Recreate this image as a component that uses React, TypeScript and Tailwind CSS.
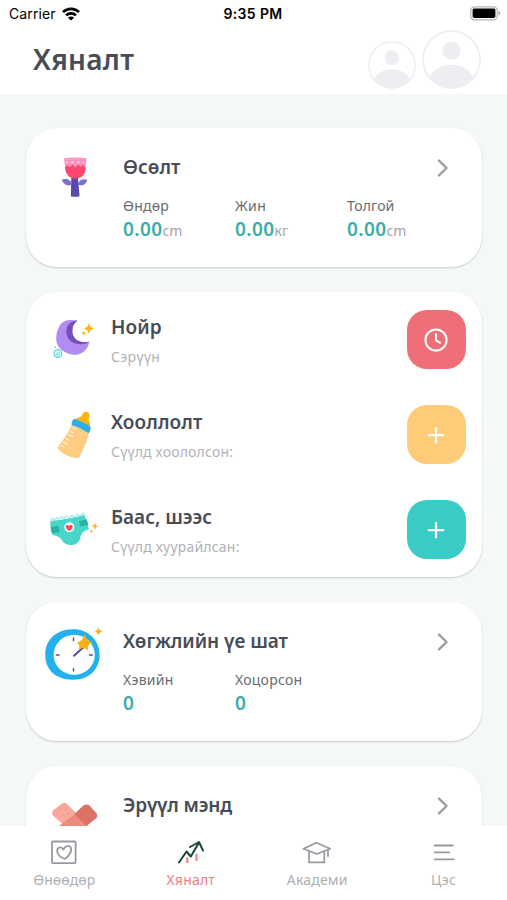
import type { ReactNode } from 'react';
import clsx from 'clsx';

interface Stat {
  label: string;
  labelClass: string;
  value: string;
  unit?: string;
}

const GROWTH_STATS: Stat[] = [
  { label: 'Өндөр', labelClass: 'tracking-[0.2px]', value: '0.00', unit: 'cm' },
  { label: 'Жин', labelClass: 'tracking-[0.4px]', value: '0.00', unit: 'кг' },
  { label: 'Толгой', labelClass: 'tracking-[0.1px]', value: '0.00', unit: 'cm' },
];

const MILESTONE_STATS: Stat[] = [
  { label: 'Хэвийн', labelClass: 'tracking-[0.25px]', value: '0' },
  { label: 'Хоцорсон', labelClass: 'tracking-[0.25px]', value: '0' },
];

function WifiIcon() {
  return (
    <svg viewBox="0 0 18 14" className="h-[14px] w-[18px]" fill="none" stroke="#000" strokeWidth="2.7">
      <path d="M1 5.100C5.400.7 12.600.7 17 5.100" />
      <path d="M4 8.400c2.800-2.700 7.200-2.700 10 0" />
      <path d="M9 13.600 5.900 10.700c1.700-1.600 4.500-1.600 6.200 0z" fill="#000" stroke="none" />
    </svg>
  );
}

function BatteryIcon() {
  return (
    <svg viewBox="0 0 31 15" className="h-[15px] w-[31px]">
      <rect x=".8" y=".8" width="26.4" height="13" rx="3.600" fill="#fff" stroke="#b4b4b4" strokeWidth="1.200" />
      <rect x="2.600" y="2.600" width="22.800" height="9.400" rx="1.800" />
      <path d="M28.500 5v4.600c1-.3 1.700-1.200 1.700-2.300S29.500 5.300 28.500 5z" fill="#a6a6a6" />
    </svg>
  );
}

function Avatar({ className }: { className: string }) {
  return (
    <svg viewBox="0 0 58 58" className={className}>
      <path d="M7.500 46.500C12 38 20 34.200 29 34.200S46 38 50.500 46.500C45 53.500 37.500 57 29 57S13 53.500 7.500 46.500z" fill="#edeef1" />
      <circle cx="29" cy="20.300" r="9" fill="#edeef1" />
      <circle cx="29" cy="29" r="28" fill="none" stroke="#edeef1" strokeWidth="1.800" />
    </svg>
  );
}

function Chevron() {
  return (
    <svg viewBox="0 0 12 20" className="mt-[2px] h-5 w-3" fill="none" stroke="#9c9fa3" strokeWidth="2.400" strokeLinecap="round" strokeLinejoin="round">
      <path d="M2 2.600 9.600 10 2 17.400" />
    </svg>
  );
}

function FlowerIcon() {
  return (
    <svg viewBox="0 0 30 44" className="h-[44px] w-[30px]">
      <path d="M11.300 21h6.500l1.800 20.200c-3 .7-6 .7-8.700.2z" fill="#5a4bab" />
      <path d="M11.800 29.500C10 31 4 31.500 1.800 24.600c4.200-1.400 9.200-.3 10 4.900zM18 29.500c2 1.500 7.500 1.700 9.300-4.800-4.300-1.400-8.400-.1-9.300 4.800z" fill="#7b70d8" />
      <path d="M4 3.200c7-.9 15.600-.8 22.700 0L25 15H5.500z" fill="#ff8fbd" />
      <path d="M5 12l2.500-1.500 2.200 1.700 2.800-2.700 2.500 2.900 3.200-2.900 2.200 2.500 2.300-2.300 2.800 2.700c.2 7-3.600 11-10 11C8.800 23.400 5.400 19 5 12z" fill="#ff4772" />
      <g fill="#ffd3e6">
        <circle cx="7" cy="7.300" r="1" />
        <circle cx="12.200" cy="7.300" r="1.200" />
        <circle cx="18" cy="7.300" r="1.200" />
        <circle cx="23.500" cy="7.300" r="1" />
      </g>
      <path d="M5 4.100h20.700" stroke="#ffb7d5" strokeWidth=".8" strokeDasharray="1.500 1.200" />
    </svg>
  );
}

function MoonIcon() {
  return (
    <svg viewBox="0 0 44 42" className="h-[42px] w-[44px]">
      <path d="M25.500 1.500C17 .2 10.500 1.300 7.500 7 5 11.500 3.800 16 4.300 21.500 5 31 17 36.800 25.500 35.500c7-1.500 10.500-6.500 11.900-12.800C27 25.500 20.500 20 20.300 12c.1-5 2-8 5.200-10.500z" fill="#b28cf0" />
      <path d="M25.500 1.500C17 2 14 7.500 14.400 13.600 15 24 27 28.500 37.400 22.700 27 24.500 20.500 20 20.300 12c.1-5 2-8 5.200-10.500z" fill="#7651bd" />
      <path d="M37 3.300c.5 4 1.600 5.600 5.700 6.200-4 .8-5.200 2.400-5.700 6.400-.7-4-1.900-5.600-6-6.400 4.100-.7 5.400-2.400 6-6.200z" fill="#fdb515" />
      <circle cx="31.700" cy="14.200" r="1.400" fill="#fdb515" />
      <circle cx="5.900" cy="34.500" r="3.900" fill="#e1fbf8" stroke="#55d5cd" strokeWidth="1.200" />
      <path d="M4 34.200c.7 2.700 3.800 2.200 3.500.2-.2-1.600-2.300-1.100-1.900.2" fill="none" stroke="#55d5cd" strokeWidth=".9" />
      <circle cx="3.300" cy="28.300" r=".9" fill="#55d5cd" />
    </svg>
  );
}

function BottleIcon() {
  return (
    <svg viewBox="0 0 40 50" className="h-[50px] w-[40px]">
      <path d="m18 14.500 16.700 8c-.8 9-6 17-9.700 25.500C17.500 48.500 8 44.500 3.200 37.500 9 30.500 14 23 18 14.500z" fill="#ffcd82" />
      <path d="M20.600 10c2.500-2.800 5.600-2.800 7.500-4.300.2-4.800 7.600-5.400 7.500 0-.1 2-1.100 2.600-.7 4.300.6 2.300 2 4 .7 7.500z" fill="#fdb515" />
      <path d="M20.300 8.800c5.500 2 10.800 4.200 15.900 7.500.9 2.500-.1 5.200-1.500 6.900-5.500-3.700-11-6.200-17-8.200-.6-2.500.6-4.700 2.600-6.200z" fill="#2eaee5" />
      <path d="m18.500 17.800 4 1.900M16.500 21.500l3 1.500M14.500 24.500l4.500 2.300M11.500 28.500l3.500 1.800M9 32l5 2.500M6.500 35.500l3.500 1.700" stroke="#fff" strokeWidth="1" />
    </svg>
  );
}

function DiaperIcon() {
  return (
    <svg viewBox="0 0 52 38" className="h-[38px] w-[52px]">
      <path d="M2.500 10C13 9 25 7 36.500 4l4.500 14.500c-5.500 1-8 4-8.700 8.500C30 36 18 36 14 29.500 12 26 9.500 25 4.500 24 2.500 20 2 14 2.500 10z" fill="#48d6c9" />
      <path d="M2.500 9.700 4.500 7l2 1.800L9 6.300l2 1.800 3-2.600 2 1.900 3-2.300 2 1.700 3.200-2.600 2 1.800 3-2.500L32 4.800l3.500-2.600L37.500 4.600" fill="none" stroke="#a7eee5" strokeWidth="1.300" />
      <path d="m3 16 7.500-1.200 1 6.400-7.500 1zM31 10.200l7.700-2 1.700 5.800-8.200 1.500z" fill="#24b3a5" />
      <circle cx="21.300" cy="16.300" r="5" fill="#fff" />
      <path d="M21.600 20.300c-6-3.600-4.300-8-.4-5.600 3.400-2.800 5.600 1.200.4 5.600z" fill="#fb4e5b" />
      <path d="M47 11.500c.5 2.600 1.200 3.200 3.500 3.700-2.500.7-3.200 1.500-3.500 4-.5-2.500-1.300-3.300-3.700-4 2.400-.5 3.200-1.100 3.700-3.700z" fill="#fdb53b" />
      <circle cx="43.500" cy="20.300" r="1.200" fill="#fdb53b" />
    </svg>
  );
}

function ClockIcon() {
  return (
    <svg viewBox="0 0 60 56" className="h-[56px] w-[60px]">
      <path d="M28 3.300C43 2.500 56 13.500 55.600 29 55.600 44 44 54 29 53.700 12 54 1 43.500 1.300 29 1 14.500 12 3.500 28 3.300z" fill="#22b1ed" />
      <ellipse cx="30.200" cy="28.800" rx="20.600" ry="20" fill="#fff" />
      <g stroke="#5a45a5" strokeLinecap="round">
        <path d="M29.500 12v2.800M29.500 42.500v2.500M12.500 29h2.600M45.500 29h2.800" strokeWidth="1.400" />
        <path d="m30 29.700 10.800-9.700" strokeWidth="2" />
      </g>
      <path d="M40.500 7.500c1.200 5.600 3 7.500 8.500 8.800-4 1.600-6 3-4.800 8.700-2.700-3-5.200-3.700-9.400-1.500 1.300-2.500.5-4.700-2-7.200 4.200-.5 6.200-3 7.700-8.800z" fill="#fdb010" />
      <path d="M54.500 1c.5 3 1.500 3.900 4.200 4.200-2.700.8-3.700 1.800-4.200 4.500-.7-2.700-1.700-3.800-4.400-4.500 2.700-.6 3.800-1.500 4.400-4.200z" fill="#fdb010" />
    </svg>
  );
}

function BandageIcon() {
  return (
    <svg viewBox="0 0 48 42" className="h-[42px] w-[48px]">
      <path d="M2 9.500 11 2.500q2.500-1.500 5 .5l21 21L25 35 2 14.500q-1.500-2.500 0-5z" fill="#f9a99b" />
      <path d="M45.500 12 39 5q-3-2.500-6.500-.5L24 13 8 25l10 12L45.500 17q1.500-2.500 0-5z" fill="#ea8d7e" />
      <path d="m32 5q3.500-2.500 6.500 0l7.500 8.500q0 2-1.500 4L35.500 25 23.500 13z" fill="#dc7266" />
      <g fill="#ea8d7e">
        <circle cx="10" cy="7.500" r=".8" />
        <circle cx="15" cy="8.500" r=".8" />
        <circle cx="6" cy="13" r=".8" />
        <circle cx="12" cy="14" r=".8" />
        <circle cx="17.500" cy="12.500" r=".8" />
      </g>
    </svg>
  );
}

function TimerGlyph() {
  return (
    <svg viewBox="0 0 24 24" className="h-6 w-6" fill="none" stroke="#fff" strokeWidth="2" strokeLinecap="round">
      <circle cx="12" cy="12" r="10.600" />
      <path d="M12 6v6.500l4.200 2.300" />
    </svg>
  );
}

function PlusGlyph() {
  return (
    <svg viewBox="0 0 24 24" className="h-6 w-6" stroke="#fff" strokeWidth="2.200" strokeLinecap="round">
      <path d="M12 5v14.400M4.800 12.200h14.400" />
    </svg>
  );
}

function HeartBoxIcon() {
  return (
    <svg viewBox="0 0 26 24" className="h-6 w-[26px]" fill="none" stroke="#96999f" strokeWidth="1.800" strokeLinejoin="round">
      <rect x="1" y="1.500" width="23.600" height="21.600" rx=".8" />
      <path d="M13.800 19C8.500 16.900 6 13.600 6.200 10.400c.3-3.500 4.500-4.300 6.300-.8 1-3.800 5.700-4.900 7.300-1.900 1.700 3.300-1.700 8.500-6 11.300z" />
    </svg>
  );
}

function TrendIcon() {
  return (
    <svg viewBox="0 0 28 26" className="h-[26px] w-7" fill="none" strokeWidth="2" strokeLinecap="round" strokeLinejoin="round">
      <path d="m2 23.500 7.500-11 4.300 5L22 3.500M13 8l9-5 4 8.500" stroke="#17483c" />
      <path d="M10.300 18.300V24M19.500 15v7" stroke="#f27b82" strokeLinecap="butt" />
    </svg>
  );
}

function AcademyIcon() {
  return (
    <svg viewBox="0 0 30 24" className="h-6 w-[30px]" fill="none" stroke="#96999f" strokeWidth="1.700" strokeLinejoin="round" strokeLinecap="round">
      <path d="M1.500 8.800 14.300 2.700l14 6L14.800 14z" />
      <path d="M7 11.500v10.900h15.300V11.300M26 9.800v6.300" />
    </svg>
  );
}

function MenuIcon() {
  return (
    <svg viewBox="0 0 24 24" className="h-6 w-6" stroke="#96999f" strokeWidth="1.800" strokeLinecap="round">
      <path d="M2.700 5.500h18.200M2.700 12.300h14.600M2.700 19.300h19" />
    </svg>
  );
}

function Card({ className, children }: { className?: string; children: ReactNode }) {
  return (
    <section className={clsx('shrink-0 rounded-[31px] bg-white shadow-[0_1px_2px_rgba(0,0,0,0.18)]', className)}>
      {children}
    </section>
  );
}

interface SummaryCardProps {
  icon: ReactNode;
  iconClass: string;
  title: string;
  titleClass: string;
  stats?: Stat[];
}

function SummaryCard({ icon, iconClass, title, titleClass, stats = [] }: SummaryCardProps) {
  return (
    <Card className="flex h-[139px]">
      <div className={clsx('w-[97px] shrink-0', iconClass)}>{icon}</div>
      <div className="flex-1 pt-[25px]">
        <div className="flex items-center justify-between pr-[33px]">
          <h2 className={clsx('text-[19px] leading-7 font-semibold whitespace-nowrap text-[#484c57]', titleClass)}>{title}</h2>
          <Chevron />
        </div>
        <div className="mt-[15px] grid grid-cols-[112px_112px_112px]">
          {stats.map((stat) => (
            <div key={stat.label}>
              <div className={clsx('text-[14px] leading-5 whitespace-nowrap text-[#686b70]', stat.labelClass)}>{stat.label}</div>
              <div className="flex items-baseline leading-[26px]">
                <span className="text-[19px] font-semibold tracking-[0.4px] text-[#3caeaa]">{stat.value}</span>
                <span className="text-[14px] text-[#a1a4a8]">{stat.unit}</span>
              </div>
            </div>
          ))}
        </div>
      </div>
    </Card>
  );
}

interface ActivityRowProps {
  icon: ReactNode;
  iconClass: string;
  title: string;
  titleClass: string;
  subtitle: string;
  subtitleClass: string;
  buttonClass: string;
  action: ReactNode;
}

function ActivityRow({ icon, iconClass, title, titleClass, subtitle, subtitleClass, buttonClass, action }: ActivityRowProps) {
  return (
    <div className="flex flex-1 items-center pr-[16.5px]">
      <div className={clsx('w-[85px] shrink-0 pt-px', iconClass)}>{icon}</div>
      <div className="flex-1 pt-[2px]">
        <h2 className={clsx('text-[19px] leading-8 font-semibold text-[#484c57]', titleClass)}>{title}</h2>
        <p className={clsx('text-[14px] leading-7 text-[#b0b3b8]', subtitleClass)}>{subtitle}</p>
      </div>
      <button aria-label={title} className={clsx('flex size-[59px] items-center justify-center rounded-[20px]', buttonClass)}>
        {action}
      </button>
    </div>
  );
}

function NavItem({ icon, label, labelClass }: { icon: ReactNode; label: string; labelClass: string }) {
  return (
    <button className="flex flex-1 flex-col items-center pt-[13px]">
      <span className="flex h-[26px] items-center">{icon}</span>
      <span className={clsx('mt-1 text-[14px] leading-[22px]', labelClass)}>{label}</span>
    </button>
  );
}

export default function App() {
  return (
    <div className="flex h-[900px] w-[507px] flex-col overflow-hidden bg-[#f4f8f9] font-['Noto_Sans',sans-serif]">
      <header className="h-[94px] shrink-0 bg-white">
        <div className="grid h-[27px] grid-cols-3 items-center pr-[6px] pl-[9px] font-['Inter',sans-serif] text-black">
          <div className="flex items-center gap-[6px] text-[14px]">
            <span className="tracking-[0.1px]">Carrier</span>
            <WifiIcon />
          </div>
          <span className="pr-1 text-center text-[14px] font-semibold tracking-[0.35px]">9:35 PM</span>
          <span className="justify-self-end">
            <BatteryIcon />
          </span>
        </div>
        <div className="flex items-start justify-between pr-[26px] pl-[33px]">
          <h1 className="mt-[14px] text-[28px] leading-9 font-semibold tracking-[0.3px] text-[#484c57]">Хяналт</h1>
          <div className="flex items-end gap-[6px] pt-[3px]">
            <Avatar className="h-12 w-12" />
            <Avatar className="h-[59px] w-[59px]" />
          </div>
        </div>
      </header>

      <main className="flex min-h-0 flex-1 flex-col gap-[25px] overflow-hidden pt-[34px] pr-[25px] pl-[26px]">
        <SummaryCard icon={<FlowerIcon />} iconClass="pt-[27px] pl-[34px]" title="Өсөлт" titleClass="tracking-[0px]" stats={GROWTH_STATS} />
        <Card className="flex h-[285px] flex-col">
          <ActivityRow
            icon={<MoonIcon />}
            iconClass="pl-[26px]"
            title="Нойр"
            titleClass="tracking-[0.1px]"
            subtitle="Сэрүүн"
            subtitleClass="tracking-[0.35px]"
            buttonClass="bg-[#ef6f79]"
            action={<TimerGlyph />}
          />
          <ActivityRow
            icon={<BottleIcon />}
            iconClass="pl-[28px]"
            title="Хооллолт"
            titleClass="tracking-[0.1px]"
            subtitle="Сүүлд хоололсон:"
            subtitleClass="tracking-[0.18px]"
            buttonClass="bg-[#fecb78]"
            action={<PlusGlyph />}
          />
          <ActivityRow
            icon={<DiaperIcon />}
            iconClass="pl-[22px]"
            title="Баас, шээс"
            titleClass="tracking-[0px]"
            subtitle="Сүүлд хуурайлсан:"
            subtitleClass="tracking-[0.2px]"
            buttonClass="bg-[#3bcbc7]"
            action={<PlusGlyph />}
          />
        </Card>
        <SummaryCard icon={<ClockIcon />} iconClass="pt-[24px] pl-[18px]" title="Хөгжлийн үе шат" titleClass="tracking-[-0.06px]" stats={MILESTONE_STATS} />
        <SummaryCard icon={<BandageIcon />} iconClass="pt-[35px] pl-[25px]" title="Эрүүл мэнд" titleClass="tracking-[-0.2px]" />
      </main>

      <nav className="flex h-[74px] shrink-0 bg-white pl-px">
        <NavItem icon={<HeartBoxIcon />} label="Өнөөдөр" labelClass="text-[#adb0b4] tracking-[0px]" />
        <NavItem icon={<TrendIcon />} label="Хяналт" labelClass="text-[#f27b82] tracking-[0.2px]" />
        <NavItem icon={<AcademyIcon />} label="Академи" labelClass="text-[#adb0b4] tracking-[0.2px]" />
        <NavItem icon={<MenuIcon />} label="Цэс" labelClass="text-[#adb0b4] tracking-[0.4px]" />
      </nav>
    </div>
  );
}
